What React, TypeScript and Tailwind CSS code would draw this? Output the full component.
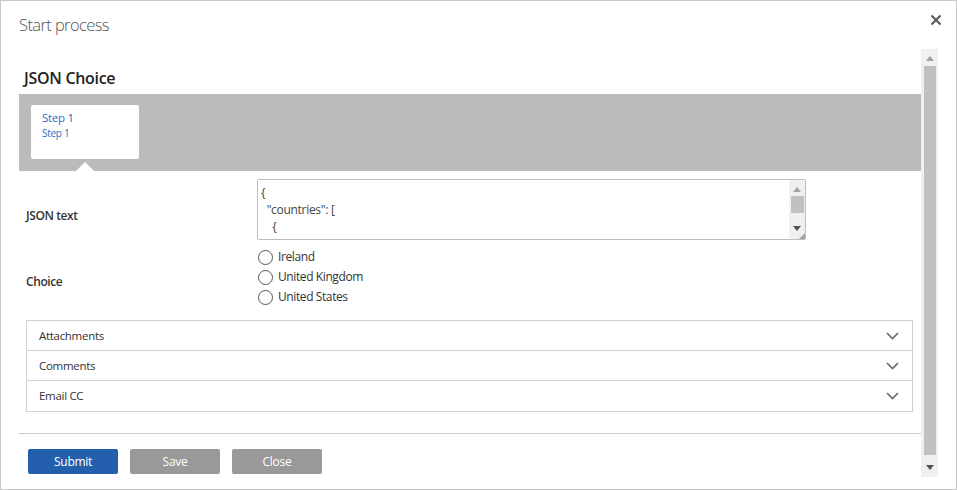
const font = "font-['Segoe_UI','Open_Sans',sans-serif]";

function Chevron() {
  return (
    <svg width="13" height="8" viewBox="0 0 13 8">
      <polyline
        points="1,1 6.5,6.5 12,1"
        fill="none"
        stroke="#666"
        strokeWidth="1.6"
      />
    </svg>
  );
}

function AccordionRow({ title, last }: { title: string; last?: boolean }) {
  return (
    <div
      className={
        "flex h-[30px] items-center justify-between pl-[12px] pr-[13px] " +
        (last ? "" : "border-b border-[#d0d0d0]")
      }
    >
      <span className="text-[11.5px] tracking-[-0.3px] text-[#333]">
        {title}
      </span>
      <Chevron />
    </div>
  );
}

function Radio({ label }: { label: string }) {
  return (
    <label className="flex h-[20px] items-center gap-[5px]">
      <span className="h-[15px] w-[15px] rounded-full border border-[#555] bg-white" />
      <span className="text-[12px] tracking-[-0.4px] text-[#333]">{label}</span>
    </label>
  );
}

function ScrollArrow({ up, color }: { up?: boolean; color: string }) {
  return (
    <svg width="8" height="5" viewBox="0 0 8 5">
      {up ? (
        <polygon points="0,5 8,5 4,0" fill={color} />
      ) : (
        <polygon points="0,0 8,0 4,5" fill={color} />
      )}
    </svg>
  );
}

export default function App() {
  return (
    <div
      className={
        font +
        " flex h-[490px] w-[957px] flex-col border border-[#c8c8c8] bg-white"
      }
    >
      {/* header */}
      <div className="flex h-[48px] shrink-0 items-start justify-between">
        <h1 className="pl-[18px] pt-[13px] text-[16.5px] font-light leading-[22px] tracking-[-0.6px] text-[#555]">
          Start process
        </h1>
        <button className="mr-[13px] mt-[12px] p-[1px]">
          <svg width="12" height="12" viewBox="0 0 12 12">
            <path
              d="M1.5 1.5 L10.5 10.5 M10.5 1.5 L1.5 10.5"
              stroke="#555"
              strokeWidth="2"
            />
          </svg>
        </button>
      </div>

      <div className="flex min-h-0 flex-1 pb-[12px] pl-[18px] pr-[18px]">
        {/* content */}
        <div className="flex w-[902px] flex-col">
          <h2 className="h-[45px] pl-[5px] pt-[19px] text-[16px] font-semibold leading-[20px] tracking-[-0.3px] text-[#222]">
            JSON Choice
          </h2>

          <div className="relative h-[77px] bg-[#bbbbbb] pl-[12px] pt-[11px]">
            <div className="h-[54px] w-[108px] rounded-[2px] bg-white pl-[11px] pt-[5px] tracking-[-0.3px] text-[#2e6bc4]">
              <div className="text-[11.5px] leading-[16px]">Step 1</div>
              <div className="text-[10px] leading-[15px]">Step 1</div>
            </div>
            <div className="absolute bottom-0 left-[57px] h-0 w-0 border-x-[9px] border-b-[9px] border-x-transparent border-b-white" />
          </div>

          {/* JSON text row */}
          <div className="mt-[8px] flex">
            <div className="w-[238px] pl-[7px] pt-[28px] text-[12px] font-semibold tracking-[-0.4px] text-[#333]">
              JSON text
            </div>
            <div className="flex h-[61px] w-[549px] rounded-[2px] border border-[#bdbdbd]">
              <div className="flex-1 whitespace-pre pl-[3px] pt-[4px] text-[12px] leading-[17px] tracking-[-0.3px] text-[#444]">
                {"{\n  \"countries\": [\n    {"}
              </div>
              <div className="relative flex w-[16px] flex-col items-center bg-[#f0f0f0] pt-[7px]">
                <ScrollArrow up color="#a3a3a3" />
                <div className="mt-[4px] h-[17px] w-[13px] bg-[#c0c0c0]" />
                <div className="mt-[13px]">
                  <ScrollArrow color="#505050" />
                </div>
                <svg
                  className="absolute bottom-0 right-0"
                  width="6"
                  height="6"
                  viewBox="0 0 6 6"
                >
                  <polygon points="6,0 6,6 0,6" fill="#a0a0a0" />
                </svg>
              </div>
            </div>
          </div>

          {/* Choice row */}
          <div className="mt-[7px] flex">
            <div className="w-[238px] pl-[7px] pt-[26px] text-[12px] font-semibold tracking-[-0.4px] text-[#333]">
              Choice
            </div>
            <div className="flex flex-col pl-[1px]">
              <Radio label="Ireland" />
              <Radio label="United Kingdom" />
              <Radio label="United States" />
            </div>
          </div>

          {/* accordion */}
          <div className="ml-[7px] mr-[8px] mt-[13px] border border-[#d0d0d0]">
            <AccordionRow title="Attachments" />
            <AccordionRow title="Comments" />
            <AccordionRow title="Email CC" last />
          </div>

          <div className="mt-[21px] border-t border-[#cccccc]" />

          <div className="flex gap-[12px] pl-[9px] pt-[15px]">
            <button className="h-[25px] w-[90px] rounded-[2px] bg-[#245fae] text-[12px] tracking-[-0.3px] text-white">
              Submit
            </button>
            <button className="h-[25px] w-[90px] rounded-[2px] bg-[#999999] text-[12px] tracking-[-0.3px] text-white">
              Save
            </button>
            <button className="h-[25px] w-[90px] rounded-[2px] bg-[#999999] text-[12px] tracking-[-0.3px] text-white">
              Close
            </button>
          </div>
        </div>

        {/* page scrollbar */}
        <div className="flex w-[17px] flex-col items-center bg-[#f0f0f0] pt-[7px]">
          <ScrollArrow up color="#a3a3a3" />
          <div className="mt-[5px] w-[12px] flex-1 bg-[#c0c0c0]" />
          <div className="pb-[7px] pt-[10px]">
            <ScrollArrow color="#505050" />
          </div>
        </div>
      </div>
    </div>
  );
}
